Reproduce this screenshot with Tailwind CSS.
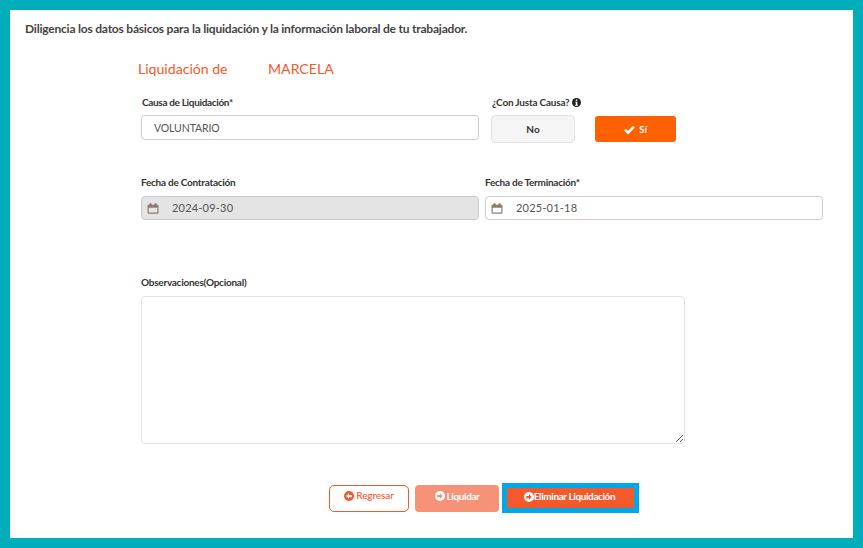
<!DOCTYPE html>
<html lang="es">
<head>
<meta charset="utf-8">
<title>Liquidación</title>
<script src="https://cdn.jsdelivr.net/npm/@tailwindcss/browser@4"></script>
</head>
<body class="m-0">
<div class="w-[863px] h-[548px] overflow-hidden border-[10px] border-[#00adbb] bg-white font-['Lato','Noto_Sans',sans-serif] text-[#333333]">
  <p class="ml-[15px] mt-[10px] h-[17px] text-[12px] leading-[17px] font-bold tracking-[-0.21px] text-[#444444]">Diligencia los datos básicos para la liquidación y la información laboral de tu trabajador.</p>
  <div class="ml-[131px] w-[690px]">
    <h2 class="mt-[23px] ml-[-3px] h-[18px] flex text-[14.1px] leading-[18px] font-normal text-[#f4592c]"><span class="w-[130px]">Liquidación de</span><span>MARCELA</span></h2>

    <div class="mt-[17px] flex">
      <div class="w-[338px]">
        <label class="block h-[14px] pl-px text-[10px] leading-[14px] font-bold tracking-[-0.33px] text-[#333333]">Causa de Liquidación*</label>
        <div class="mt-[6px] h-[25px] rounded-[4px] border border-[#cccccc] bg-white pl-[12px] text-[10.5px] leading-[24px] tracking-[-0.1px] text-[#555555]">VOLUNTARIO</div>
      </div>
      <div class="ml-[12px]">
        <label class="flex h-[14px] items-center pl-px text-[10px] leading-[14px] font-bold tracking-[-0.2px] text-[#333333]">¿Con Justa Causa?
          <svg class="ml-[2px] h-[9px] w-[9px]" viewBox="0 0 16 16"><circle cx="8" cy="8" r="8" fill="#222222"/><rect x="6.8" y="2.6" width="2.6" height="2.6" fill="#fff"/><path d="M5.6 6.6h3.8v5.4h1.2v1.6H5.6V12h1.2V8.2H5.6z" fill="#fff"/></svg>
        </label>
        <div class="mt-[6px] flex items-start">
          <button class="h-[28px] w-[84px] rounded-[4px] border border-[#e3e3e3] bg-[#f5f5f5] text-[10px] font-bold text-[#333333]">No</button>
          <button class="ml-[20px] mt-px flex h-[26px] w-[81px] items-center justify-center gap-[4px] rounded-[3px] bg-[#ff6000] text-[10px] font-bold text-white">
            <svg class="h-[9px] w-[11px]" viewBox="0 0 12 10"><path d="M1 5.2 4.4 8.6 11 1.8" fill="none" stroke="#fff" stroke-width="2.8"/></svg>
            Sí
          </button>
        </div>
      </div>
    </div>

    <div class="mt-[32px] flex gap-[6px]">
      <div class="w-[338px]">
        <label class="block h-[14px] text-[10px] leading-[14px] font-bold tracking-[-0.25px] text-[#333333]">Fecha de Contratación</label>
        <div class="mt-[7px] flex h-[24px] items-center rounded-[4px] border border-[#cccccc] bg-[#e4e4e4] pl-[5px] text-[11px] text-[#555555]">
          <svg class="h-[11px] w-[12px]" viewBox="0 0 12 11"><path d="M0.5 3Q0.5 1.8 1.7 1.8H10.3Q11.5 1.8 11.5 3V9.6Q11.5 10.8 10.3 10.8H1.7Q0.5 10.8 0.5 9.6Z M1.7 4.8V9.6H10.3V4.8Z" fill="#8d7b74" fill-rule="evenodd"/><rect x="2.3" y="0.2" width="2.4" height="3.4" rx="1" fill="#8d7b74"/><rect x="7.3" y="0.2" width="2.4" height="3.4" rx="1" fill="#8d7b74"/></svg>
          <span class="ml-[13px] tracking-[0.2px]">2024-09-30</span>
        </div>
      </div>
      <div class="w-[338px]">
        <label class="block h-[14px] text-[10px] leading-[14px] font-bold tracking-[-0.25px] text-[#333333]">Fecha de Terminación*</label>
        <div class="mt-[7px] flex h-[24px] items-center rounded-[4px] border border-[#cccccc] bg-white pl-[5px] text-[11px] text-[#555555]">
          <svg class="h-[11px] w-[12px]" viewBox="0 0 12 11"><path d="M0.5 3Q0.5 1.8 1.7 1.8H10.3Q11.5 1.8 11.5 3V9.6Q11.5 10.8 10.3 10.8H1.7Q0.5 10.8 0.5 9.6Z M1.7 4.8V9.6H10.3V4.8Z" fill="#8d7b74" fill-rule="evenodd"/><rect x="2.3" y="0.2" width="2.4" height="3.4" rx="1" fill="#8d7b74"/><rect x="7.3" y="0.2" width="2.4" height="3.4" rx="1" fill="#8d7b74"/></svg>
          <span class="ml-[13px] tracking-[0.2px]">2025-01-18</span>
        </div>
      </div>
    </div>

    <label class="mt-[55px] block h-[14px] text-[10px] leading-[14px] font-bold tracking-[-0.25px] text-[#333333]">Observaciones(Opcional)</label>
    <textarea class="mt-[7px] block h-[148px] w-[544px] rounded-[4px] border border-[#e4e4e4] bg-white"></textarea>

    <div class="mt-[39px] ml-[188px] flex items-center">
      <button class="flex h-[27px] w-[80px] items-center justify-center gap-[2px] rounded-[5px] border border-[#f4592c] bg-white pb-[5px] text-[10px] font-medium tracking-[-0.1px] text-[#f4592c]">
        <svg class="h-[10px] w-[10px]" viewBox="0 0 16 16"><circle cx="8" cy="8" r="8" fill="#f4592c"/><path d="M8 3.5 3.5 8 8 12.5V9.8h4.5V6.2H8z" fill="#fff"/></svg>
        Regresar
      </button>
      <button class="ml-[6px] flex h-[27px] w-[84px] items-center justify-center gap-[2px] rounded-[4px] bg-[#f69376] pb-[4px] text-[10px] font-bold tracking-[-0.4px] text-white">
        <svg class="h-[10px] w-[10px]" viewBox="0 0 16 16"><circle cx="8" cy="8" r="8" fill="#fff"/><path d="M8 3.5 12.5 8 8 12.5V9.8H3.5V6.2H8z" fill="#f69376"/></svg>
        Liquidar
      </button>
      <button class="ml-[3px] flex h-[30px] w-[137px] items-center justify-center rounded-none border-[5px] border-[#00a8e8] bg-[#f4592c] pb-[3px] pr-[2px] text-[10px] font-bold tracking-[-0.4px] text-white">
        <svg class="h-[10px] w-[10px]" viewBox="0 0 16 16"><circle cx="8" cy="8" r="8" fill="#fff"/><path d="M8 3.5 12.5 8 8 12.5V9.8H3.5V6.2H8z" fill="#f4592c"/></svg>
        Eliminar Liquidación
      </button>
    </div>
  </div>
</div>
</body>
</html>
